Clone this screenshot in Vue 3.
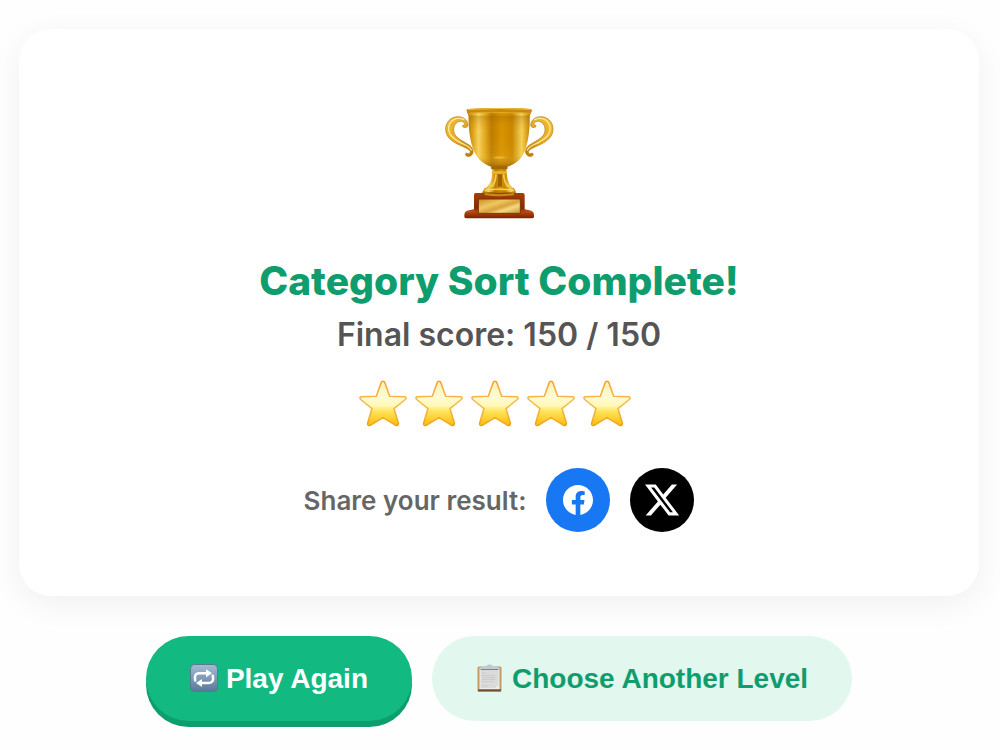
<script setup>
import { ref } from 'vue'

const score = ref(150)
const maxScore = 150
const stars = 5

function playAgain() {
  score.value = 150
}
</script>

<template>
  <main class="results">
    <section class="card">
      <svg class="trophy" viewBox="-3 0 420 405" aria-hidden="true">
        <defs>
          <linearGradient id="cup" x1="0" x2="1" y1="0" y2="0">
            <stop offset="0" stop-color="#b87a04" />
            <stop offset=".08" stop-color="#d99c12" />
            <stop offset=".18" stop-color="#f6d460" />
            <stop offset=".29" stop-color="#e0a51c" />
            <stop offset=".38" stop-color="#bd7c00" />
            <stop offset=".54" stop-color="#d99400" />
            <stop offset=".7" stop-color="#c98600" />
            <stop offset=".85" stop-color="#f4d25a" />
            <stop offset=".92" stop-color="#dfa51f" />
            <stop offset="1" stop-color="#b07604" />
          </linearGradient>
          <linearGradient id="cup-shade" x1="0" x2="0" y1="0" y2="1">
            <stop offset="0" stop-color="#8f5700" stop-opacity=".3" />
            <stop offset=".3" stop-color="#d99400" stop-opacity="0" />
            <stop offset=".75" stop-color="#ffd84a" stop-opacity=".1" />
            <stop offset="1" stop-color="#7a4700" stop-opacity=".65" />
          </linearGradient>
          <linearGradient id="wood" x1="0" x2="0" y1="0" y2="1">
            <stop offset="0" stop-color="#a63d0c" />
            <stop offset=".6" stop-color="#8c2800" />
            <stop offset=".75" stop-color="#b5470c" />
            <stop offset="1" stop-color="#7b2100" />
          </linearGradient>
          <linearGradient id="plate" x1="0" x2="1" y1="0" y2="1">
            <stop offset="0" stop-color="#c38b25" />
            <stop offset=".35" stop-color="#f0c860" />
            <stop offset=".55" stop-color="#d7a23d" />
            <stop offset=".7" stop-color="#f5d981" />
            <stop offset="1" stop-color="#c8912e" />
          </linearGradient>
          <linearGradient id="handle-fill" x1="0" x2="1" y1="0" y2="1">
            <stop offset="0" stop-color="#f0bd3a" />
            <stop offset=".5" stop-color="#e6ab22" />
            <stop offset="1" stop-color="#b57600" />
          </linearGradient>
          <g id="handle">
            <path
              d="M114 92C114 76 101 65 84 65C62 65 46 82 47 104C48 126 64 137 82 147C100 156 119 162 121 170C121 176 115 178 110 174C106 175 105 180 109 183C117 187 127 182 129 173C131 158 119 150 106 143C87 132 72 124 71 106C70 91 79 80 91 79C101 79 106 85 104 90C101 89 97 91 98 95C102 99 113 98 114 92Z"
              fill="url(#handle-fill)"
              stroke="#b37808"
              stroke-width="2"
            />
            <path d="M102 74C80 64 58 75 56 98C54 120 72 132 90 142C105 150 120 155 124 165" fill="none" stroke="#ffe99a" stroke-width="4" stroke-linecap="round" />
          </g>
        </defs>
        <use href="#handle" />
        <use href="#handle" transform="matrix(-1 0 0 1 416 0)" />
        <path d="M188 213H228L231 239C234 261 241 274 252 282H164C176 274 184 259 186 239Z" fill="url(#cup)" />
        <path d="M111 45C118 38 297 38 304 45C305 54 300 57 299 66C300 92 297 132 286 164C275 195 250 211 228 216Q208 223 188 216C166 211 143 196 131 166C118 132 115 92 116 66C115 57 110 54 111 45Z" fill="url(#cup)" />
        <path d="M116 62H299C300 92 297 132 286 164C275 195 250 211 228 216Q208 223 188 216C166 211 143 196 131 166C118 132 115 92 116 62Z" fill="url(#cup-shade)" />
        <path d="M109 44C118 37 297 37 306 44L303 54Q208 49 112 54Z" fill="#c98a0c" />
        <path d="M113 43Q208 38 302 43" fill="none" stroke="#f3c545" stroke-width="3" />
        <path d="M116 55Q208 50 299 55" fill="none" stroke="#eab935" stroke-width="2" />
        <path d="M188 188Q208 194 228 188Q215 184 208 184Q201 184 188 188Z" fill="#f7d05a" opacity=".5" />
        <rect x="183" y="214" width="50" height="9" rx="4" fill="#a36700" />
        <rect x="185" y="229" width="46" height="7" rx="3" fill="#e9b733" />
        <path d="M198 238Q197 263 185 276M221 238Q222 262 235 277" fill="none" stroke="#f5cd55" stroke-width="5" />
        <path d="M210 238V277" stroke="#9a6100" stroke-width="12" />
        <path d="M164 279Q208 270 252 279L258 292Q255 301 244 301H171Q159 301 157 292Z" fill="url(#cup)" />
        <path d="M164 286Q208 279 252 286" fill="none" stroke="#f7d578" stroke-width="4" />
        <path d="M159 294Q208 288 256 294" fill="none" stroke="#a36a05" stroke-width="3" />
        <path d="M137 294H278Q284 294 284 300V343L304 347Q312 350 312 359V365Q312 370 306 370H110Q103 370 103 365V359Q103 350 111 347L132 343V300Q132 294 137 294Z" fill="url(#wood)" />
        <path d="M109 351L134 347M284 347L305 351" stroke="#c45a1b" stroke-width="3" />
        <rect x="145" y="312" width="126" height="43" fill="url(#plate)" stroke="#7c3600" stroke-width="3" />
        <path d="M164 297Q208 304 252 297" fill="none" stroke="#c98c18" stroke-width="6" />
      </svg>

      <h1>Category Sort Complete!</h1>
      <p class="score">Final score: {{ score }} / {{ maxScore }}</p>

      <div class="stars" role="img" aria-label="5 stars">
        <svg v-for="n in stars" :key="n" class="star" viewBox="0 0 48 48">
          <defs>
            <linearGradient id="star-fill" x1="0" x2="0" y1="0" y2="1">
              <stop offset="0" stop-color="#fff0b0" />
              <stop offset=".35" stop-color="#fffbd4" />
              <stop offset=".55" stop-color="#fff9b8" />
              <stop offset=".68" stop-color="#ffe45c" />
              <stop offset="1" stop-color="#ffb90a" />
            </linearGradient>
            <linearGradient id="star-edge" x1="0" x2="0" y1="0" y2="1">
              <stop offset="0" stop-color="#f5a236" />
              <stop offset=".5" stop-color="#f8bc4c" />
              <stop offset="1" stop-color="#eda51c" />
            </linearGradient>
          </defs>
          <path
            d="M22.2 2.4Q24 .2 25.8 2.4L30.7 16.3L45.4 16.7Q48.2 17.3 46.3 19.5L35 28.7L39.4 43.2Q39.6 46.2 36.8 45.4L24 37.6L11.2 45.4Q8.4 46.2 8.6 43.2L13 28.7L1.7 19.5Q-.2 17.3 2.6 16.7L17.3 16.3Z"
            fill="url(#star-fill)"
            stroke="url(#star-edge)"
            stroke-width="1.6"
            stroke-linejoin="round"
          />
        </svg>
      </div>

      <div class="share">
        <span>Share your result:</span>
        <a class="social facebook" href="#facebook" aria-label="Share on Facebook">
          <svg viewBox="0 0 24 24" fill="currentColor">
            <path d="M24 12.073c0-6.627-5.373-12-12-12s-12 5.373-12 12c0 5.99 4.388 10.954 10.125 11.854v-8.385H7.078v-3.47h3.047V9.43c0-3.007 1.792-4.669 4.533-4.669 1.312 0 2.686.235 2.686.235v2.953H15.83c-1.491 0-1.956.925-1.956 1.874v2.25h3.328l-.532 3.47h-2.796v8.385C19.612 23.027 24 18.062 24 12.073z" />
          </svg>
        </a>
        <a class="social x" href="#x" aria-label="Share on X">
          <svg viewBox="0 0 24 24" fill="currentColor">
            <path d="M18.244 2.25h3.308l-7.227 8.26 8.502 11.24H16.17l-5.214-6.817L4.99 21.75H1.68l7.73-8.835L1.254 2.25H8.08l4.713 6.231zm-1.161 17.52h1.833L7.084 4.126H5.117z" />
          </svg>
        </a>
      </div>
    </section>

    <div class="actions">
      <button type="button" class="btn primary" @click="playAgain">
        <svg viewBox="0 0 28 28" aria-hidden="true">
          <defs>
            <linearGradient id="tile" x1="0" x2="0" y1="0" y2="1">
              <stop offset="0" stop-color="#a5bdd3" />
              <stop offset="1" stop-color="#58799b" />
            </linearGradient>
          </defs>
          <rect x=".5" y=".5" width="27" height="27" rx="4" fill="url(#tile)" stroke="#557a91" />
          <path d="M5.2 16.5Q3.6 9.3 9.5 9.3H17M22.8 11.8Q24.4 19 18.5 19H11" fill="none" stroke="#fff" stroke-width="2.6" stroke-linecap="round" />
          <path d="M16 5.3L22 9.3L16 13.3ZM12 15L6 19L12 23Z" fill="#fff" />
        </svg>
        Play Again
      </button>
      <button type="button" class="btn secondary">
        <svg viewBox="0 0 28 28" aria-hidden="true">
          <rect x="1.5" y="2.5" width="24" height="25" rx="1.5" fill="#c29a62" />
          <path d="M2 26.5H25" stroke="#765033" stroke-width="2" />
          <path d="M3.5 4H23.5V25H3.5Z" fill="#eeeeef" />
          <path d="M4.5 5H22.5V21L19.5 24H4.5Z" fill="#dadadb" />
          <path d="M6 9H9.5M6 11.5H18.5M6 13.5H19.5M6 15.5H19.5M6 17.5H17.5M6 22H11.5" stroke="#c6c6c8" stroke-width=".8" />
          <path d="M4.5 3.5Q4.5 2.5 6.5 2.5H10Q10.5 .5 13.5 .5Q16.5 .5 17 2.5H20.5Q22.5 2.5 22.5 3.5V6H4.5Z" fill="#c3ccd3" />
          <path d="M4.5 5.5H22.5" stroke="#7c858c" />
          <circle cx="13.5" cy="2.4" r="1.1" fill="#eaf4f5" stroke="#8ca1b0" stroke-width=".6" />
        </svg>
        Choose Another Level
      </button>
    </div>
  </main>
</template>

<style>
body {
  margin: 0;
  background: #fefefe;
}
</style>

<style scoped>
.results {
  padding: 29px 21px 16px 19px;
  font-family: Inter, "Liberation Sans", sans-serif;
}

.card {
  display: flex;
  flex-direction: column;
  align-items: center;
  padding: 66px 32px 64px;
  border-radius: 32px;
  background: #fff;
  box-shadow: 0 8px 32px rgba(0, 0, 0, 0.06);
  text-align: center;
}

.trophy {
  width: 140px;
  height: 135px;
}

h1 {
  margin: 27px 0 10px;
  color: #0f9d6e;
  font-size: 39px;
  font-weight: 800;
  line-height: 48px;
}

.score {
  margin: 0 0 25px;
  color: #555;
  font-size: 32px;
  font-weight: 600;
  line-height: 40px;
}

.stars {
  display: flex;
  gap: 8px;
  margin: 0 8px 40px 0;
}

.star {
  width: 48px;
  height: 48px;
}

.share {
  display: flex;
  flex-wrap: wrap;
  align-items: center;
  justify-content: center;
  gap: 20px;
  color: #666;
  font-size: 26px;
  font-weight: 600;
}

.social {
  display: flex;
  align-items: center;
  justify-content: center;
  width: 64px;
  height: 64px;
  border-radius: 50%;
  color: #fff;
}

.facebook {
  background: #1877f2;
}

.facebook svg {
  width: 30px;
  height: 30px;
}

.x {
  background: #000;
}

.x svg {
  width: 38px;
  height: 38px;
}

.actions {
  display: flex;
  flex-wrap: wrap;
  justify-content: center;
  gap: 20px;
  margin-top: 40px;
}

.btn {
  display: flex;
  align-items: center;
  gap: 8px;
  padding: 26px 44px;
  border: 0;
  border-radius: 44px;
  font-family: "Liberation Sans", Arial, sans-serif;
  font-size: 28px;
  font-weight: 700;
  line-height: 33px;
  cursor: pointer;
}

.btn svg {
  width: 28px;
  height: 28px;
  margin-bottom: 2px;
}

.primary {
  background: #12b981;
  box-shadow: 0 6px 0 #0f9d6e;
  color: #fff;
}

.secondary {
  background: #e2f7ee;
  color: #0f9d6e;
}
</style>
